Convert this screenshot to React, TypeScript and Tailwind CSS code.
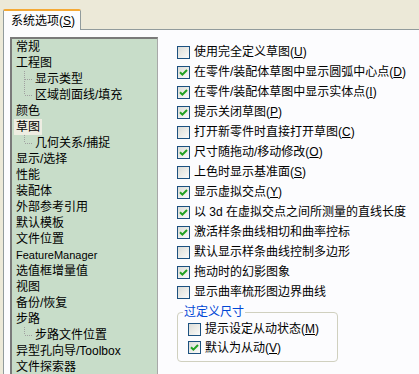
import React from 'react';

type Node = { label: string; child?: 'mid' | 'last'; selected?: boolean };

const tree: Node[] = [
  { label: '常规' },
  { label: '工程图' },
  { label: '显示类型', child: 'mid' },
  { label: '区域剖面线/填充', child: 'last' },
  { label: '颜色' },
  { label: '草图', selected: true },
  { label: '几何关系/捕捉', child: 'last' },
  { label: '显示/选择' },
  { label: '性能' },
  { label: '装配体' },
  { label: '外部参考引用' },
  { label: '默认模板' },
  { label: '文件位置' },
  { label: 'FeatureManager' },
  { label: '选值框增量值' },
  { label: '视图' },
  { label: '备份/恢复' },
  { label: '步路' },
  { label: '步路文件位置', child: 'last' },
  { label: '异型孔向导/Toolbox' },
  { label: '文件探索器' },
];

// [text, mnemonic, checked]
const options: [string, string | null, boolean][] = [
  ['使用完全定义草图', 'U', false],
  ['在零件/装配体草图中显示圆弧中心点', 'D', true],
  ['在零件/装配体草图中显示实体点', 'I', true],
  ['提示关闭草图', 'P', true],
  ['打开新零件时直接打开草图', 'C', false],
  ['尺寸随拖动/移动修改', 'O', true],
  ['上色时显示基准面', 'S', false],
  ['显示虚拟交点', 'Y', true],
  ['以 3d 在虚拟交点之间所测量的直线长度', null, true],
  ['激活样条曲线相切和曲率控标', null, true],
  ['默认显示样条曲线控制多边形', null, false],
  ['拖动时的幻影图象', null, true],
  ['显示曲率梳形图边界曲线', null, false],
];

function Checkbox({ checked }: { checked: boolean }) {
  return (
    <span className="w-[13px] h-[13px] shrink-0 border border-[#1c5180] bg-gradient-to-br from-[#dcdcd7] to-[#fbfbf9] flex items-center justify-center">
      {checked && (
        <svg width="9" height="9" viewBox="0 0 9 9">
          <path d="M1 4.2 L3.4 6.6 L8 2" fill="none" stroke="#21a121" strokeWidth="2" />
        </svg>
      )}
    </span>
  );
}

function Label({ text, mn }: { text: string; mn: string | null }) {
  return (
    <span className="whitespace-nowrap">
      {text}
      {mn && (
        <>
          (<span className="underline underline-offset-1">{mn}</span>)
        </>
      )}
    </span>
  );
}

function Connector({ kind }: { kind: 'mid' | 'last' }) {
  return (
    <svg width="19" height="16" className="shrink-0" shapeRendering="crispEdges">
      <line x1="8.5" y1="0" x2="8.5" y2={kind === 'mid' ? 16 : 8} stroke="#a0a0a0" strokeDasharray="1 1" />
      <line x1="9" y1="8.5" x2="17" y2="8.5" stroke="#a0a0a0" strokeDasharray="1 1" />
    </svg>
  );
}

export default function App() {
  return (
    <div className="w-[419px] h-[374px] overflow-hidden bg-[#ece9d8] text-[12px] text-black font-['Liberation_Sans','Noto_Sans_CJK_SC',sans-serif]">
      <div className="h-[29px] flex items-end pl-[3px]">
        <div className="h-[21px] w-[78px] -mb-px relative bg-[#fcfcfe] border-x border-[#919b9c] border-t-2 border-t-[#f5a935] rounded-t-[2px] flex items-center pl-[7px] leading-[16px]">
          系统选项(<span className="underline underline-offset-1">S</span>)
        </div>
      </div>
      <div className="ml-[3px] h-[345px] border-l border-t border-[#919b9c] bg-[#fcfcfe] flex">
        <div className="ml-[6px] mt-[7px] w-[148px] shrink-0 border-l-2 border-t-2 border-l-[#7a7a7a] border-t-[#7a7a7a] border-r border-r-[#a8a8a8] bg-[#c8ddc9] pl-[4px] leading-[16px]">
          {tree.map((n) => (
            <div key={n.label} className="h-[16px] flex items-center whitespace-nowrap">
              {n.child && <Connector kind={n.child} />}
              {n.selected ? (
                <span className="bg-[#eeede2] -ml-[2px] px-[2px]">{n.label}</span>
              ) : n.label === 'FeatureManager' ? (
                <span className="text-[11px]">{n.label}</span>
              ) : (
                <span>{n.label}</span>
              )}
            </div>
          ))}
        </div>
        <div className="ml-[19px] pt-[12px] flex flex-col">
          {options.map(([t, mn, c]) => (
            <div key={t} className="h-[20px] flex items-center gap-[4px] leading-[16px]">
              <Checkbox checked={c} />
              <Label text={t} mn={mn} />
            </div>
          ))}
          <fieldset className="mt-[2px] w-[161px] h-[58px] border border-[#d0d0bf] rounded-[4px] pl-[10px] pb-[4px]">
            <legend className="-ml-[5px] px-[1px] text-[#0046d5] leading-[16px]">过定义尺寸</legend>
            <div className="h-[18px] flex items-center gap-[4px] leading-[16px]">
              <Checkbox checked={false} />
              <Label text="提示设定从动状态" mn="M" />
            </div>
            <div className="h-[19px] flex items-center gap-[4px] leading-[16px]">
              <Checkbox checked={true} />
              <Label text="默认为从动" mn="V" />
            </div>
          </fieldset>
        </div>
      </div>
    </div>
  );
}
